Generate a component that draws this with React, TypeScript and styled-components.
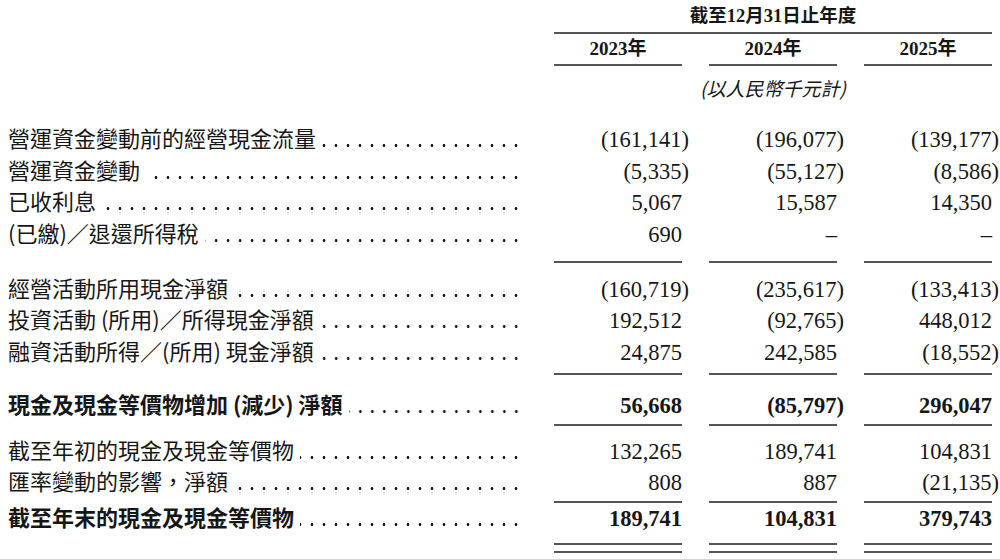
import React from 'react';
import styled, { createGlobalStyle } from 'styled-components';

const GlobalStyle = createGlobalStyle`
  html, body { margin: 0; padding: 0; background: #ffffff; }
  body {
    width: 1000px;
    height: 559px;
    overflow: hidden;
    color: #161616;
    font-family: "Liberation Serif", "Noto Sans CJK TC", serif;
  }
`;

const Page = styled.div`
  display: flex;
  flex-direction: column;
  padding: 0 8px;
`;

const Grid = styled.div`
  display: grid;
  grid-template-columns: 1fr 128px 128px 128px;
  column-gap: 27px;
`;

const HeadRow = styled(Grid)``;

const Heading = styled.div`
  grid-column: 2 / 5;
  height: 32px;
  line-height: 32px;
  text-align: center;
  font-size: 18.5px;
  font-weight: 700;
  border-bottom: 2px solid #555;
`;

const YearCell = styled.div`
  height: 30px;
  line-height: 30px;
  text-align: center;
  font-size: 19px;
  font-weight: 700;
  border-bottom: 2px solid #555;
`;

const UnitRow = styled(Grid)`
  margin-bottom: 14.25px;
`;

const Unit = styled.div`
  grid-column: 3;
  display: flex;
  justify-content: center;
  height: 44px;
  line-height: 44px;
  white-space: nowrap;
  font-family: "Noto Sans CJK TC", sans-serif;
  font-size: 19px;
  font-style: italic;
`;

const Row = styled(Grid)<{ $bold?: boolean }>`
  grid-template-rows: 31.5px;
  align-items: baseline;
  font-weight: ${(p) => (p.$bold ? 700 : 400)};
`;

const Label = styled.div`
  display: flex;
  align-items: baseline;
  padding-right: 5px;
  font-family: "Noto Sans CJK TC", sans-serif;
  font-size: 22px;
  line-height: 27px;
  white-space: nowrap;
`;

const Leader = styled.span`
  flex: 1;
  height: 3px;
  margin-left: 6px;
  background-image: radial-gradient(circle at center, #1a1a1a 1.1px, transparent 1.7px);
  background-size: 12px 3px;
  background-position: right center;
  background-repeat: repeat-x;
`;

const Num = styled.div`
  text-align: right;
  font-size: 22.5px;
  line-height: 31.5px;
  white-space: nowrap;
`;

const Close = styled.span`
  margin-right: -7px;
`;

const RuleRow = styled(Grid)<{ $pt: number; $pb: number }>`
  padding-top: ${(p) => p.$pt}px;
  padding-bottom: ${(p) => p.$pb}px;
`;

const Line = styled.div`
  height: 2px;
  background: #555;
`;

const DoubleLine = styled.div`
  height: 6px;
  border-top: 2px solid #555;
  border-bottom: 2px solid #555;
`;

type Item =
  | { kind: 'row'; label: string; values: string[]; bold?: boolean }
  | { kind: 'rule'; pt: number; pb: number }
  | { kind: 'double'; pt: number };

const items: Item[] = [
  { kind: 'row', label: '營運資金變動前的經營現金流量', values: ['(161,141)', '(196,077)', '(139,177)'] },
  { kind: 'row', label: '營運資金變動', values: ['(5,335)', '(55,127)', '(8,586)'] },
  { kind: 'row', label: '已收利息', values: ['5,067', '15,587', '14,350'] },
  { kind: 'row', label: '(已繳)／退還所得稅', values: ['690', '–', '–'] },
  { kind: 'rule', pt: 10.75, pb: 10.75 },
  { kind: 'row', label: '經營活動所用現金淨額', values: ['(160,719)', '(235,617)', '(133,413)'] },
  { kind: 'row', label: '投資活動 (所用)／所得現金淨額', values: ['192,512', '(92,765)', '448,012'] },
  { kind: 'row', label: '融資活動所得／(所用) 現金淨額', values: ['24,875', '242,585', '(18,552)'] },
  { kind: 'rule', pt: 4.75, pb: 15.25 },
  { kind: 'row', label: '現金及現金等價物增加 (減少) 淨額', values: ['56,668', '(85,797)', '296,047'], bold: true },
  { kind: 'rule', pt: 2.25, pb: 9.75 },
  { kind: 'row', label: '截至年初的現金及現金等價物', values: ['132,265', '189,741', '104,831'] },
  { kind: 'row', label: '匯率變動的影響，淨額', values: ['808', '887', '(21,135)'] },
  { kind: 'rule', pt: 2.25, pb: 0.25 },
  { kind: 'row', label: '截至年末的現金及現金等價物', values: ['189,741', '104,831', '379,743'], bold: true },
  { kind: 'double', pt: 8.25 },
];

const Value: React.FC<{ v: string }> = ({ v }) => {
  if (v.startsWith('(')) {
    return (
      <Num>
        {v.slice(0, -1)}
        <Close>)</Close>
      </Num>
    );
  }
  return <Num>{v}</Num>;
};

export default function App() {
  return (
    <>
      <GlobalStyle />
      <Page>
        <HeadRow>
          <Heading>截至12月31日止年度</Heading>
        </HeadRow>
        <HeadRow>
          <div />
          <YearCell>2023年</YearCell>
          <YearCell>2024年</YearCell>
          <YearCell>2025年</YearCell>
        </HeadRow>
        <UnitRow>
          <Unit>(以人民幣千元計)</Unit>
        </UnitRow>
        {items.map((it, i) => {
          if (it.kind === 'row') {
            return (
              <Row key={i} $bold={it.bold}>
                <Label>
                  {it.label}
                  <Leader />
                </Label>
                {it.values.map((v, j) => (
                  <Value key={j} v={v} />
                ))}
              </Row>
            );
          }
          if (it.kind === 'rule') {
            return (
              <RuleRow key={i} $pt={it.pt} $pb={it.pb}>
                <div />
                <Line />
                <Line />
                <Line />
              </RuleRow>
            );
          }
          return (
            <RuleRow key={i} $pt={it.pt} $pb={0}>
              <div />
              <DoubleLine />
              <DoubleLine />
              <DoubleLine />
            </RuleRow>
          );
        })}
      </Page>
    </>
  );
}
